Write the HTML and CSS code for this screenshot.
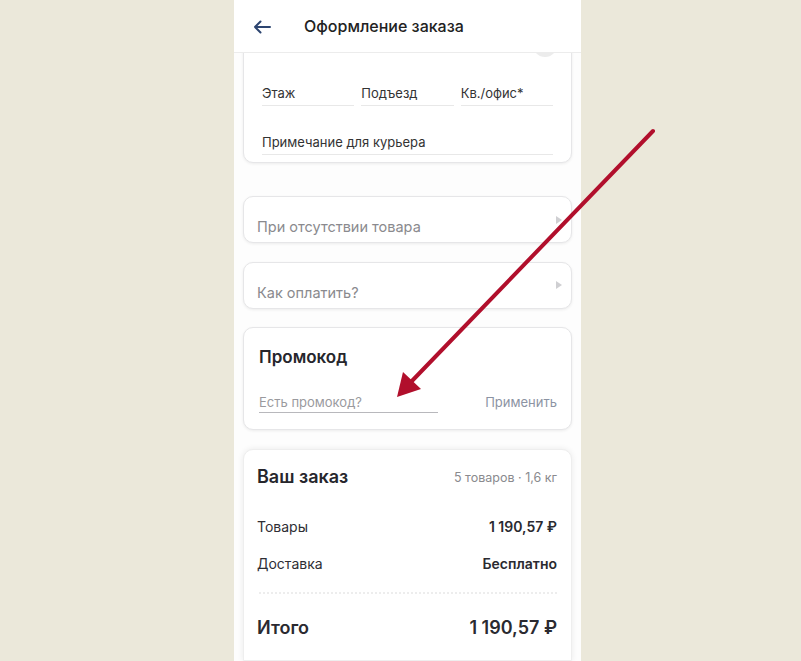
FILE: index.html
```html
<!DOCTYPE html>
<html lang="ru">
<head>
<meta charset="utf-8">
<title>Оформление заказа</title>
<link rel="stylesheet" href="styles.css">
</head>
<body>
<div class="stage">
  <div class="phone">
    <header class="topbar">
      <svg class="back" width="18" height="14" viewBox="0 0 18 14"><path d="M17 7H2M7.5 1.5L2 7l5.5 5.5" fill="none" stroke="#2d4570" stroke-width="2" stroke-linecap="round" stroke-linejoin="round"/></svg>
      <span class="title">Оформление заказа</span>
    </header>
    <main class="content">
      <section class="card address">
        <div class="toggle-row"><span class="toggle"></span></div>
        <div class="fields">
          <div class="field">Этаж</div>
          <div class="field">Подъезд</div>
          <div class="field">Кв./офис*</div>
        </div>
        <div class="field wide">Примечание для курьера</div>
      </section>

      <section class="card select">
        <span class="placeholder">При отсутствии товара</span>
        <span class="caret"></span>
      </section>

      <section class="card select second">
        <span class="placeholder">Как оплатить?</span>
        <span class="caret"></span>
      </section>

      <section class="card promo">
        <h2 class="card-title">Промокод</h2>
        <div class="promo-row">
          <span class="promo-input">Есть промокод?</span>
          <span class="apply">Применить</span>
        </div>
      </section>

      <section class="card order">
        <div class="order-head">
          <h2 class="card-title big">Ваш заказ</h2>
          <span class="meta">5 товаров · 1,6 кг</span>
        </div>
        <div class="line"><span>Товары</span><b>1 190,57 ₽</b></div>
        <div class="line"><span>Доставка</span><b>Бесплатно</b></div>
        <div class="dots"></div>
        <div class="total"><span>Итого</span><b>1 190,57 ₽</b></div>
      </section>
    </main>
  </div>
</div>
<svg class="pointer" width="801" height="661" viewBox="0 0 801 661">
  <line x1="653" y1="131" x2="410" y2="383" stroke="#b10f2c" stroke-width="4" stroke-linecap="round"/>
  <polygon points="397,397 403,372 421,389" fill="#b10f2c"/>
</svg>
</body>
</html>
```

FILE: styles.css
```css
* { box-sizing: border-box; }
html, body { margin: 0; padding: 0; }
body {
  background: #ebe8da;
  font-family: "Inter", "Noto Sans", sans-serif;
  color: #2a2a30;
  height: 661px;
  overflow: hidden;
}
.stage {
  padding-left: 234px;
}
.phone {
  width: 347px;
  height: 661px;
  background: #fdfdfd;
  display: flex;
  flex-direction: column;
  overflow: hidden;
}
.topbar {
  height: 53px;
  flex: none;
  display: flex;
  align-items: center;
  padding-left: 19px;
  background: #fff;
  border-bottom: 1px solid #ececec;
  position: relative;
  z-index: 2;
}
.back { margin-right: 33px; margin-top: 1px; }
.title {
  font-size: 16px;
  font-weight: 500;
  color: #222;
}
.content {
  padding: 0 9px;
  display: flex;
  flex-direction: column;
  overflow: hidden;
}
.card {
  background: #fff;
  border: 1px solid #e6e6e8;
  border-radius: 10px;
  box-shadow: 0 1px 3px rgba(0,0,0,0.07);
}
.address {
  margin-top: -21px;
  padding: 0 18px 7px;
}
.toggle-row {
  display: flex;
  justify-content: flex-end;
  margin-right: -4px;
}
.toggle {
  width: 24px;
  height: 24px;
  border-radius: 12px;
  background: #ececec;
}
.fields {
  display: grid;
  grid-template-columns: 1fr 1fr 1fr;
  gap: 7px;
  margin-top: 27px;
}
.field {
  font-size: 13px;
  color: #333;
  padding: 0 0 3px;
  border-bottom: 1px solid #e8e8e8;
  line-height: 18px;
}
.field.wide { margin-top: 27px; }
.select {
  height: 47px;
  margin-top: 33px;
  padding: 19px 14px 0 13px;
  position: relative;
}
.select.second { margin-top: 19px; }
.placeholder {
  font-size: 14.5px;
  color: #8a8a8e;
  line-height: 18px;
}
.caret {
  position: absolute;
  right: 9px;
  top: 19px;
  width: 0;
  height: 0;
  border-left: 6px solid #cfcfd2;
  border-top: 4.5px solid transparent;
  border-bottom: 4.5px solid transparent;
}
.select.second .caret { top: 18px; }
.promo {
  margin-top: 18px;
  height: 103px;
  padding: 18px 14px 0 15px;
}
.card-title {
  margin: 0;
  font-size: 17px;
  font-weight: 600;
  color: #26262c;
  line-height: 22px;
}
.card-title.big { font-size: 18px; }
.promo-row {
  display: flex;
  justify-content: space-between;
  align-items: flex-end;
  margin-top: 25px;
}
.promo-input {
  width: 179px;
  font-size: 13px;
  color: #9a9a9e;
  border-bottom: 1px solid #b8b8bc;
  padding-bottom: 1px;
  line-height: 18px;
}
.apply {
  font-size: 13px;
  color: #8c93a3;
  line-height: 18px;
  padding-bottom: 2px;
}
.order {
  margin-top: 19px;
  padding: 16px 14px 20px 13px;
  border-radius: 10px 10px 0 0;
  box-shadow: 0 0 6px rgba(0,0,0,0.08);
  border-color: #eeeeee;
}
.order-head {
  display: flex;
  justify-content: space-between;
  align-items: center;
}
.meta {
  font-size: 12.5px;
  color: #8a8a8e;
}
.line {
  display: flex;
  justify-content: space-between;
  font-size: 14px;
  line-height: 18px;
}
.line + .line { margin-top: 19px; }
.order-head + .line { margin-top: 30px; }
.line span { color: #2e2e34; }
.line b { font-weight: 600; color: #2a2a30; }
.dots {
  margin: 19px 0 0 2px;
  border-top: 2px dotted #ededed;
}
.total {
  display: flex;
  justify-content: space-between;
  margin-top: 22px;
  font-size: 18px;
  line-height: 24px;
}
.total span { font-weight: 600; }
.total b { font-weight: 600; }
.pointer {
  position: absolute;
  left: 0;
  top: 0;
  pointer-events: none;
}
```
